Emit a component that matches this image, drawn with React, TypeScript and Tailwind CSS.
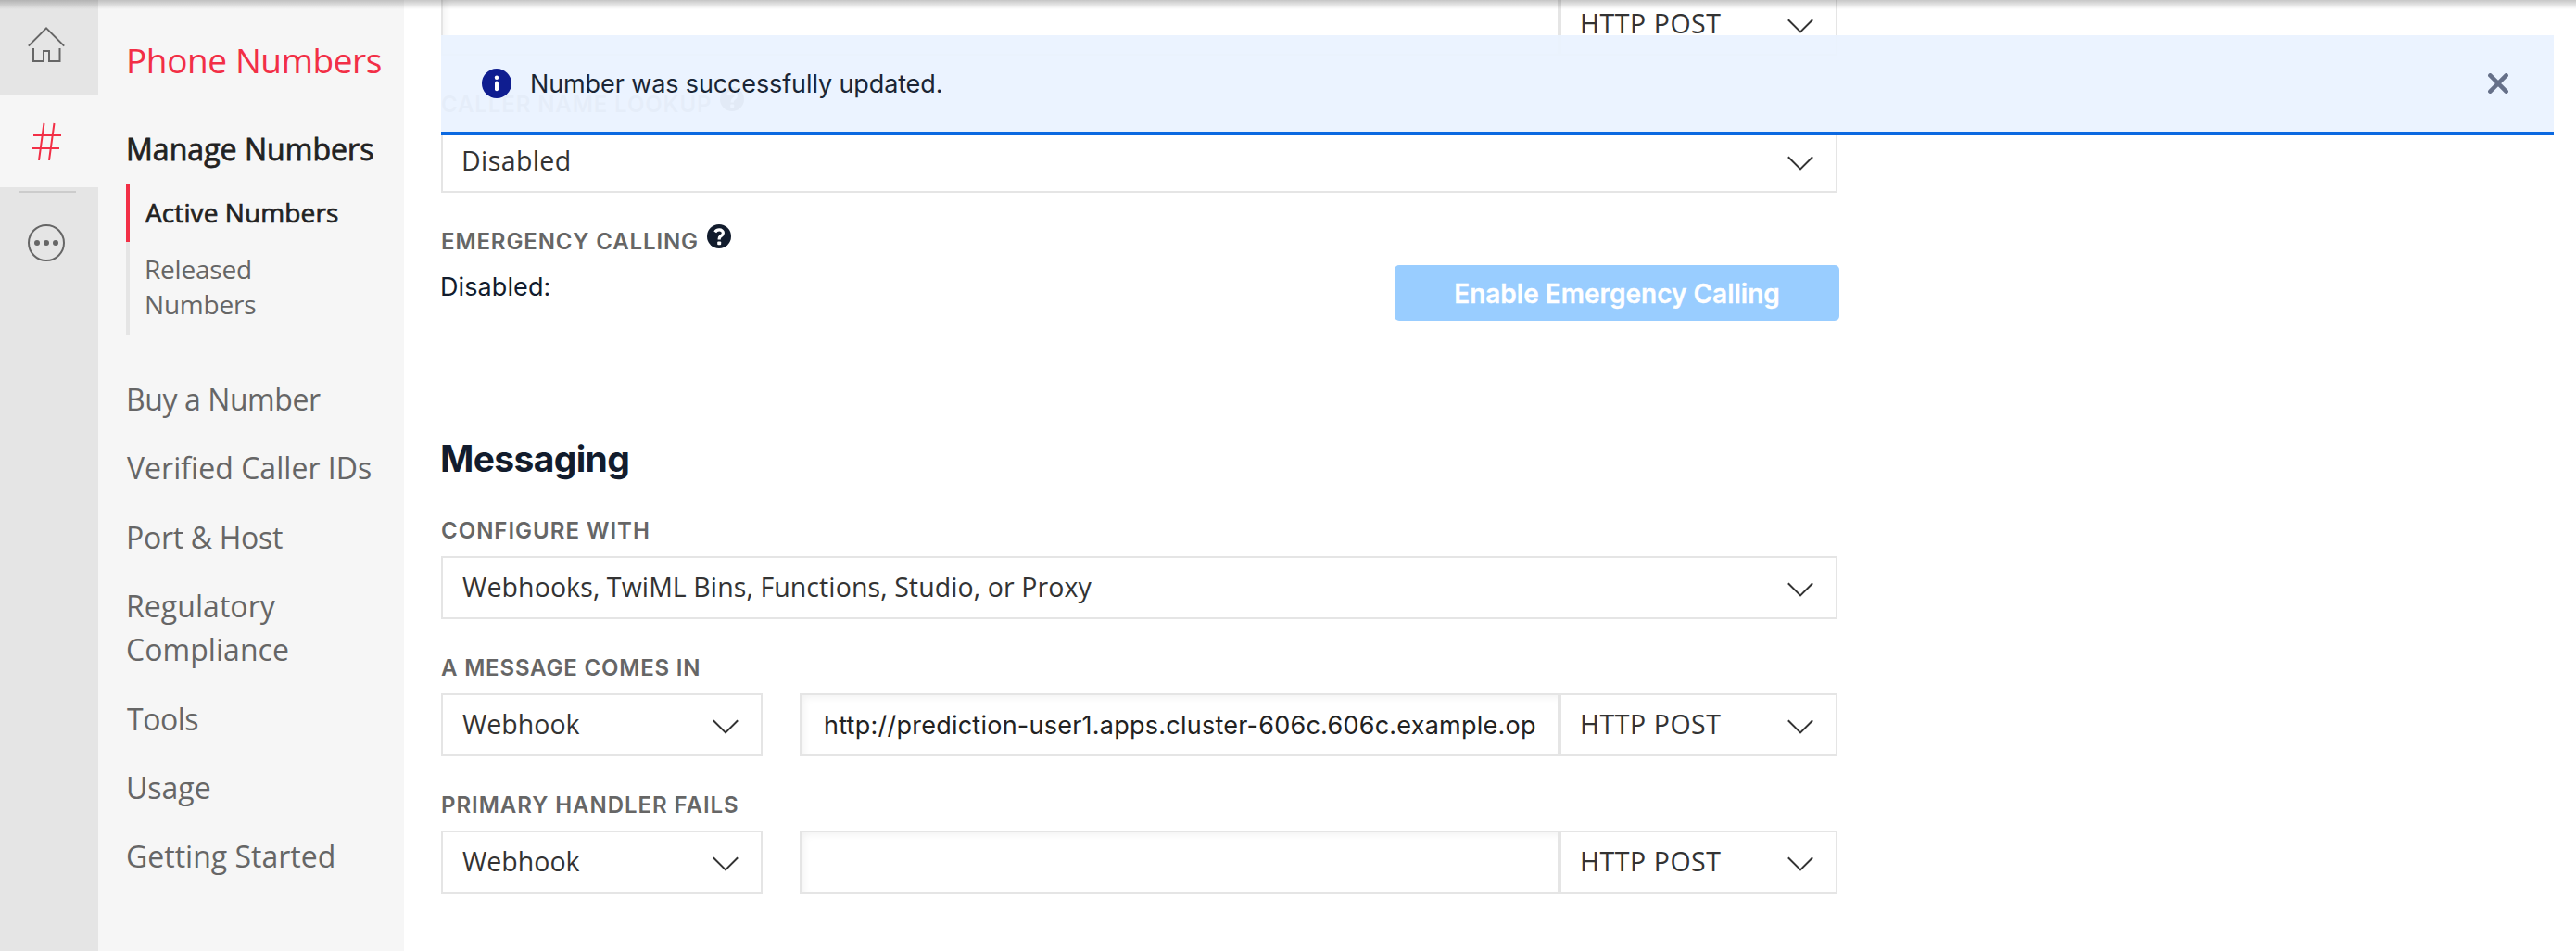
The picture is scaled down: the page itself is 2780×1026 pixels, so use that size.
import type { ReactNode } from "react";

function Chevron() {
  return (
    <svg className="h-4 w-7 shrink-0" viewBox="0 0 28 16" fill="none" stroke="#333" strokeWidth="2">
      <path d="M0.8 1.2 L14 14.4 L27.2 1.2" />
    </svg>
  );
}

function Help() {
  return (
    <svg className="mb-[12px] ml-[9px] size-[26px] shrink-0" viewBox="0 0 26 26" fill="none">
      <circle cx="13" cy="13" r="13" fill="#121c2d" />
      <path d="M8.7 8.4 C10 6.3 11.4 5.9 13.2 5.9 C15.8 5.9 17.4 7.4 17.4 9.2 C17.4 12.6 13.2 12.2 13.2 15.4 V16.4" stroke="#fff" strokeWidth="3.2" />
      <rect x="11.2" y="18.4" width="4" height="3.8" rx="1" fill="#fff" />
    </svg>
  );
}

function Label({ children, help, className }: { children: ReactNode; help?: boolean; className: string }) {
  return (
    <div className="flex h-20 items-center pt-[27px] pb-px font-['Inter',sans-serif] text-2xl/6 font-semibold text-[#666]">
      <span className={className}>{children}</span>
      {help && <Help />}
    </div>
  );
}

function Select({ children, className, textClass = "pl-[21px]" }: { children: ReactNode; className: string; textClass?: string }) {
  return (
    <div className={`flex h-[68px] shrink-0 items-center justify-between border-2 border-[#e5e5e5] bg-white pr-6 text-[28.5px] text-[#333] ${className}`}>
      <span className={`pb-[2px] ${textClass}`}>{children}</span>
      <span className="pt-[3px]">
        <Chevron />
      </span>
    </div>
  );
}

function UrlInput({ value, className }: { value?: string; className: string }) {
  return (
    <div
      className={`flex h-[68px] shrink-0 items-center overflow-hidden border-2 border-[#e5e5e5] bg-white pt-[3px] pl-[24px] font-['Inter',sans-serif] text-[27px] tracking-[0.24px] whitespace-nowrap text-[#222] shadow-[inset_4px_4px_8px_-2px_rgba(0,0,0,0.06)] ${className}`}
    >
      {value}
    </div>
  );
}

function HandlerRow({ url }: { url?: string }) {
  return (
    <div className="flex">
      <Select className="w-[347px]">Webhook</Select>
      <UrlInput className="ml-10 w-[820px]" value={url} />
      <Select className="w-[300px]" textClass="pl-5 tracking-[0.55px]">HTTP POST</Select>
    </div>
  );
}

const navItems = [
  { text: "Buy a Number", className: "tracking-[-0.42px]" },
  { text: "Verified Caller IDs", className: "tracking-[0.03px] pl-px" },
  { text: "Port & Host", className: "tracking-[-0.3px]" },
  { text: "Regulatory Compliance", className: "tracking-[0.05px]" },
  { text: "Tools", className: "tracking-[-0.5px] pl-px" },
  { text: "Usage", className: "tracking-normal" },
  { text: "Getting Started", className: "tracking-normal" },
];

function Rail() {
  return (
    <div className="w-[106px] shrink-0 bg-[#e5e5e5]">
      <div className="h-[102px] pt-7 pl-[29px]">
        <svg className="size-[42px]" viewBox="0 0 42 42" fill="none" stroke="#666" strokeWidth="2">
          <path d="M1.8 21.6 L21 2.4 L40.2 21.6" />
          <path d="M7 24 V38 H18 V27 H24 V38 H35.5 V24" />
        </svg>
      </div>
      <div className="h-[100px] bg-[#f6f6f6] pt-[29px] pl-[33px]">
        <svg className="h-[42px] w-[34px]" viewBox="0 0 34 42" fill="none" stroke="#f22f46" strokeWidth="2">
          <path d="M3 15 H33 M1 29 H31" />
          <path d="M14.5 2 L9 42 M25.5 2 L20 42" />
        </svg>
      </div>
      <div className="mt-1 ml-5 h-[2px] w-[62px] bg-[#ccc]" />
      <div className="pt-[33px] pl-[29px]">
        <svg className="size-[42px]" viewBox="0 0 42 42" fill="none">
          <circle cx="21" cy="21" r="19" stroke="#666" strokeWidth="2" />
          <g fill="#666">
            <circle cx="11" cy="21" r="3" />
            <circle cx="21" cy="21" r="3" />
            <circle cx="31" cy="21" r="3" />
          </g>
        </svg>
      </div>
    </div>
  );
}

function Sidebar() {
  return (
    <div className="w-[330px] shrink-0 bg-[#f6f6f6] pt-[41px] pl-[30px] whitespace-nowrap">
      <div className="text-[37px]/[48px] tracking-[-0.4px] text-[#f22f46]">Phone Numbers</div>
      <div className="mt-[52px] text-[32px]/[40px] tracking-[0.05px] text-[#222] [-webkit-text-stroke:0.8px_#222]">
        Manage Numbers
      </div>
      <div className="mt-[18px] text-[28px]/[38px]">
        <div className="h-[62px] border-l-4 border-[#f22f46] pt-[11px] pl-[17px] tracking-[0.1px] text-[#222] [-webkit-text-stroke:0.7px_#222]">
          Active Numbers
        </div>
        <div className="h-[100px] w-[200px] border-l-4 border-[#e5e5e5] pt-[10px] pl-[16px] tracking-[-0.2px] whitespace-normal text-[#666]">
          Released Numbers
        </div>
      </div>
      <div className="mt-[46px] flex w-[280px] flex-col gap-[27.4px] text-[32px]/[47px] whitespace-normal text-[#666]">
        {navItems.map((item) => (
          <div key={item.text} className={item.className}>
            {item.text}
          </div>
        ))}
      </div>
    </div>
  );
}

function Alert() {
  return (
    <div className="absolute top-[38px] right-6 left-[476px] flex h-[108px] items-center border-b-4 border-[#0263e0] bg-[#ebf3ff] pr-[49px] pl-11 opacity-[0.96]">
      <svg className="size-8" viewBox="0 0 32 32">
        <circle cx="16" cy="16" r="16" fill="#06148c" />
        <circle cx="16" cy="9.8" r="2.2" fill="#fff" />
        <rect x="14" y="13.6" width="4" height="10.6" rx="2" fill="#fff" />
      </svg>
      <span className="grow pt-[3px] pl-5 font-['Inter',sans-serif] text-[27px] tracking-[-0.12px] text-[#121c2d]">
        Number was successfully updated.
      </span>
      <svg className="size-[22px]" viewBox="0 0 22 22" fill="none" stroke="#606b85" strokeWidth="4.6" strokeLinecap="round">
        <path d="M2.4 2.4 L19.6 19.6 M19.6 2.4 L2.4 19.6" />
      </svg>
    </div>
  );
}

export default function App() {
  return (
    <div className="relative flex h-[1026px] w-[2780px] overflow-hidden bg-white font-['Open_Sans',sans-serif]">
      <Rail />
      <Sidebar />
      <div className="ml-10 w-[1509px]">
        <div className="-mt-2 flex w-[1507px]">
          <UrlInput className="w-[1207px]" />
          <Select className="w-[300px]" textClass="pl-5 tracking-[0.55px]">HTTP POST</Select>
        </div>
        <Label help className="tracking-[0.9px]">CALLER NAME LOOKUP</Label>
        <Select className="w-[1507px]" textClass="pl-5 tracking-[0.4px]">Disabled</Select>
        <Label help className="tracking-[0.88px]">EMERGENCY CALLING</Label>
        <div className="-mt-[2px] flex justify-between">
          <span className="-ml-px font-['Inter',sans-serif] text-[27px]/[47px] tracking-[0.1px] text-[#121c2d]">Disabled:</span>
          <div className="flex h-[60px] w-[480px] items-center justify-center rounded-[5px] bg-[#99cdff] pt-[2px] font-['Inter',sans-serif] text-[28px] font-semibold text-white [-webkit-text-stroke:0.3px_#fff]">
            Enable Emergency Calling
          </div>
        </div>
        <h2 className="mt-[125px] -ml-px h-[49px] font-['Inter',sans-serif] text-[39px]/[48px] font-bold tracking-[-0.65px] text-[#121c2d]">
          Messaging
        </h2>
        <Label className="tracking-[1px]">CONFIGURE WITH</Label>
        <Select className="w-[1507px]" textClass="pl-[21px] tracking-[0.1px]">
          Webhooks, TwiML Bins, Functions, Studio, or Proxy
        </Select>
        <Label className="tracking-[0.82px]">A MESSAGE COMES IN</Label>
        <HandlerRow url="http://prediction-user1.apps.cluster-606c.606c.example.op" />
        <Label className="tracking-[0.96px]">PRIMARY HANDLER FAILS</Label>
        <HandlerRow />
      </div>
      <Alert />
      <div className="absolute inset-x-0 top-0 h-[10px] bg-linear-to-b from-black/22 to-transparent" />
    </div>
  );
}
